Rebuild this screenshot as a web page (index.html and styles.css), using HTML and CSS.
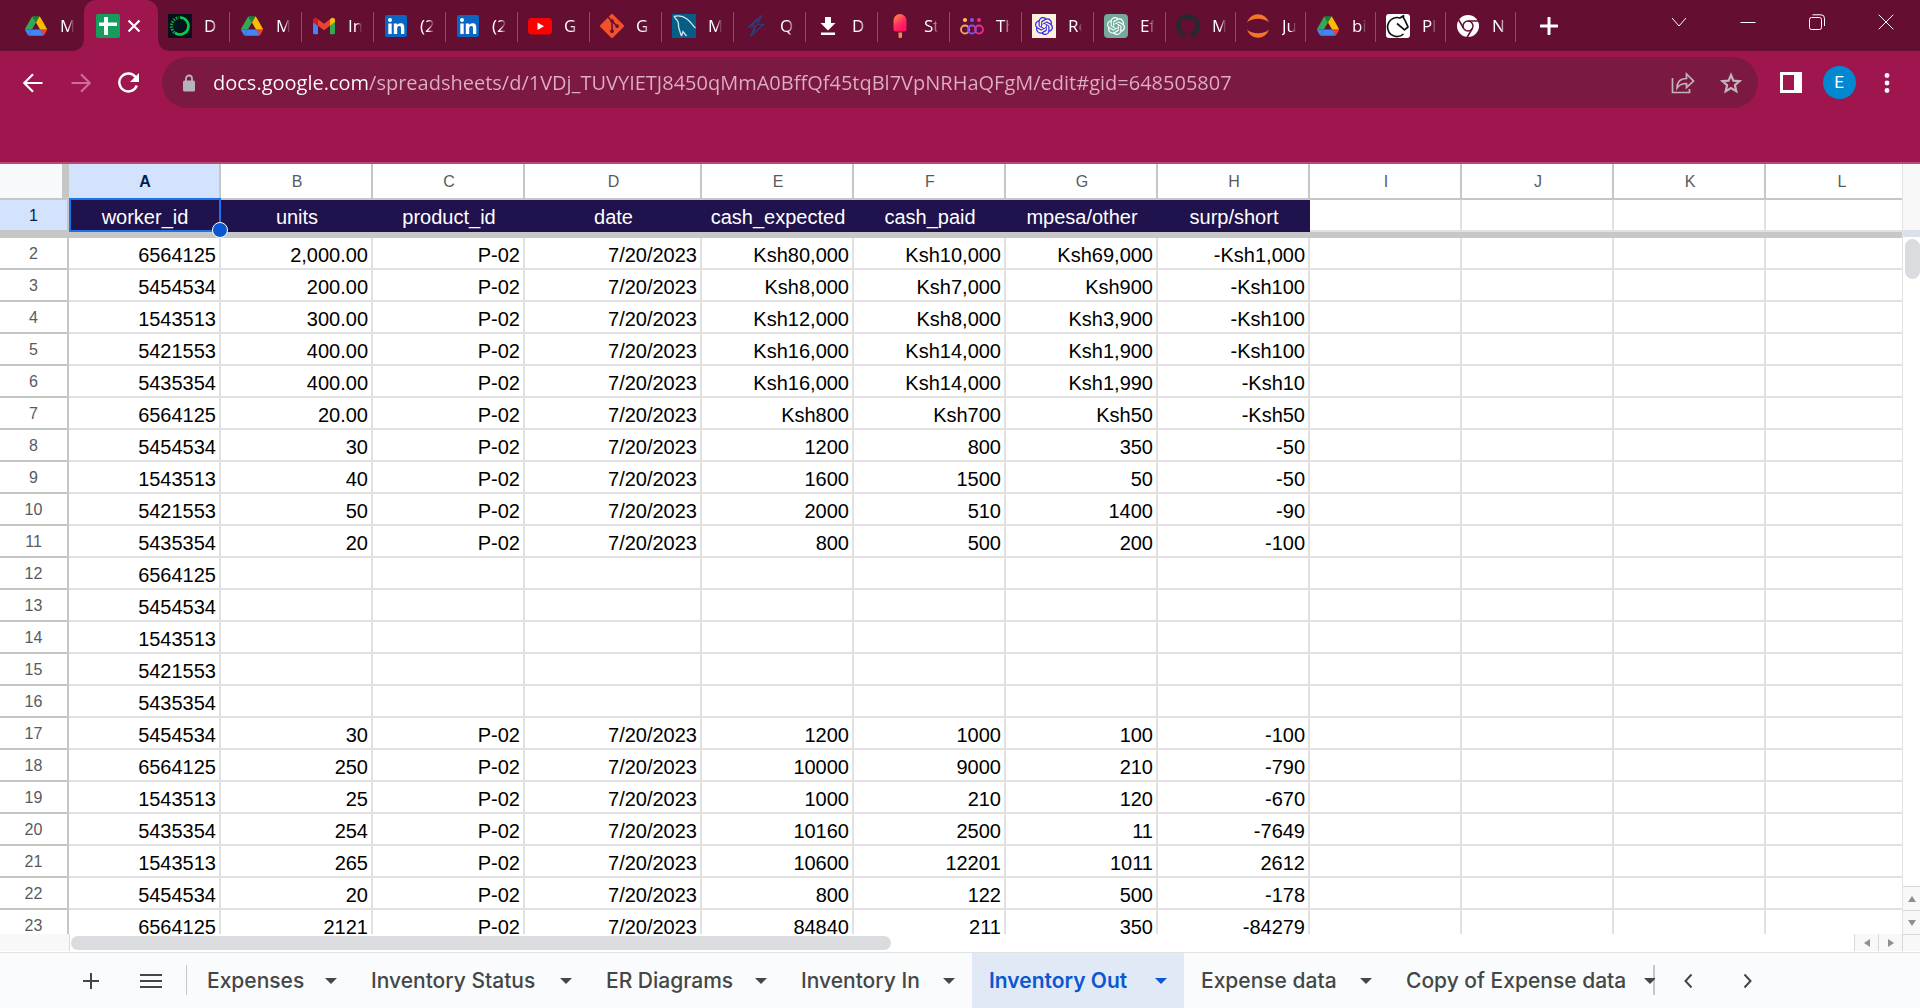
FILE: index.html
```html
<!DOCTYPE html>
<html lang="en">
<head>
<meta charset="utf-8">
<title>Inventory Out</title>
<link rel="stylesheet" href="styles.css">
</head>
<body>
<svg class="sprite" aria-hidden="true">
  <symbol id="drive" viewBox="0 0 87.3 78">
    <path fill="#4285f4" d="m6.6 66.85 3.85 6.65c.8 1.4 1.95 2.5 3.3 3.3l13.75-23.8h-27.5c0 1.55.4 3.1 1.2 4.5z"/>
    <path fill="#34a853" d="m43.65 25-13.75-23.8c-1.35.8-2.5 1.9-3.3 3.3l-25.4 44a9.06 9.06 0 0 0-1.2 4.5h27.5z"/>
    <path fill="#ea4335" d="m73.55 76.8c1.35-.8 2.5-1.9 3.3-3.3l1.6-2.75 7.65-13.25c.8-1.4 1.2-2.95 1.2-4.5h-27.5l5.85 11.5z"/>
    <path fill="#188038" d="m43.65 25 13.75-23.8c-1.35-.8-2.9-1.2-4.5-1.2h-18.5c-1.6 0-3.15.45-4.5 1.2z"/>
    <path fill="#4285f4" d="m59.8 53h-32.3l-13.75 23.8c1.35.8 2.9 1.2 4.5 1.2h50.8c1.6 0 3.15-.45 4.5-1.2z"/>
    <path fill="#fbbc04" d="m73.4 26.5-12.7-22c-.8-1.4-1.95-2.5-3.3-3.3l-13.75 23.8 16.15 28h27.45c0-1.55-.4-3.1-1.2-4.5z"/>
  </symbol>
  <symbol id="linkedin" viewBox="0 0 24 24">
    <rect x="1" y="1" width="22" height="22" rx="2" fill="#0a66c2"/>
    <circle cx="6" cy="6" r="2" fill="#fff"/>
    <path fill="#fff" d="M4.300 9.500h3.400V20H4.300zM9.800 9.500H13v1.500c.6-1 1.800-1.800 3.500-1.800 3.100 0 3.800 2 3.800 4.700V20H17v-5.400c0-1.300-.1-2.700-1.800-2.700s-2 1.300-2 2.600V20H9.800z"/>
  </symbol>
  <symbol id="knot" viewBox="0 0 24 24">
    <path d="M22.2819 9.8211a5.9847 5.9847 0 0 0-.5157-4.9108 6.0462 6.0462 0 0 0-6.5098-2.9A6.0651 6.0651 0 0 0 4.9807 4.1818a5.9847 5.9847 0 0 0-3.9977 2.9 6.0462 6.0462 0 0 0 .7427 7.0966 5.98 5.98 0 0 0 .511 4.9107 6.051 6.051 0 0 0 6.5146 2.9001A5.9847 5.9847 0 0 0 13.2599 24a6.0557 6.0557 0 0 0 5.7718-4.2058 5.9894 5.9894 0 0 0 3.9977-2.9001 6.0557 6.0557 0 0 0-.7475-7.0729zm-9.022 12.6081a4.4755 4.4755 0 0 1-2.8764-1.0408l.1419-.0804 4.7783-2.7582a.7948.7948 0 0 0 .3927-.6813v-6.7369l2.02 1.1686a.071.071 0 0 1 .038.052v5.5826a4.504 4.504 0 0 1-4.4945 4.4944zm-9.6607-4.1254a4.4708 4.4708 0 0 1-.5346-3.0137l.142.0852 4.783 2.7582a.7712.7712 0 0 0 .7806 0l5.8428-3.3685v2.3324a.0804.0804 0 0 1-.0332.0615L9.74 19.9502a4.4992 4.4992 0 0 1-6.1408-1.6464zM2.3408 7.8956a4.485 4.485 0 0 1 2.3655-1.9728V11.6a.7664.7664 0 0 0 .3879.6765l5.8144 3.3543-2.0201 1.1685a.0757.0757 0 0 1-.071 0l-4.8303-2.7865A4.504 4.504 0 0 1 2.3408 7.872zm16.5963 3.8558L13.1038 8.364 15.1192 7.2a.0757.0757 0 0 1 .071 0l4.8303 2.7913a4.4944 4.4944 0 0 1-.6765 8.1042v-5.6772a.79.79 0 0 0-.407-.667zm2.0107-3.0231l-.142-.0852-4.7735-2.7818a.7759.7759 0 0 0-.7854 0L9.409 9.2297V6.8974a.0662.0662 0 0 1 .0284-.0615l4.8303-2.7866a4.4992 4.4992 0 0 1 6.6802 4.66zM8.3065 12.863l-2.02-1.1638a.0804.0804 0 0 1-.038-.0567V6.0742a4.4992 4.4992 0 0 1 7.3757-3.4537l-.142.0805L8.704 5.459a.7948.7948 0 0 0-.3927.6813zm1.0976-2.3654l2.602-1.4998 2.6069 1.4998v2.9994l-2.5974 1.4997-2.6067-1.4997Z"/>
  </symbol>
</svg>

<header class="browser">
  <div class="strip">
    <nav class="tabs" aria-label="Open tabs">
      <button class="tab tab-first"><svg class="fav"><use href="#drive" x="1" y="1" width="22" height="22"/></svg><span class="tab-name">M</span></button>
      <button class="tab tab-active" aria-label="Current tab">
        <svg class="fav" viewBox="0 0 24 24"><rect width="24" height="24" rx="2" fill="#169c5b"/><path fill="#fff" d="M8 3h4v18H8zM3 8.500h18v3.500H3z"/></svg>
        <svg class="tab-close" viewBox="0 0 14 14"><path d="M1.500 1.500l11 11M12.500 1.500l-11 11" stroke="#fff" stroke-width="2.200"/></svg>
      </button>
      <button class="tab"><svg class="fav" viewBox="0 0 24 24"><rect width="24" height="24" fill="#07111b"/><path d="M12 3.500a8.500 8.500 0 1 1-5 15.400" fill="none" stroke="#0ccb4b" stroke-width="2.600"/><path d="M6.500 18.500A8.500 8.500 0 0 1 11 3.600" fill="none" stroke="#0aa544" stroke-width="3" stroke-dasharray="1.500 1.200"/></svg><span class="tab-name">D</span></button>
      <button class="tab"><svg class="fav"><use href="#drive" x="1" y="1" width="22" height="22"/></svg><span class="tab-name">M</span></button>
      <button class="tab"><svg class="fav" viewBox="48 27 96 96"><path fill="#4285f4" d="M58 108h14V74L52 59v43c0 3.320 2.690 6 6 6"/><path fill="#34a853" d="M120 108h14c3.320 0 6-2.690 6-6V59l-20 15"/><path fill="#fbbc04" d="M120 48v26l20-15v-8c0-7.420-8.470-11.650-14.400-7.200"/><path fill="#ea4335" d="M72 74V48l24 18 24-18v26L96 92"/><path fill="#c5221f" d="M52 51v8l20 15V48l-5.600-4.200c-5.940-4.450-14.400-.22-14.400 7.200"/></svg><span class="tab-name">In</span></button>
      <button class="tab"><svg class="fav"><use href="#linkedin"/></svg><span class="tab-name">(2</span></button>
      <button class="tab"><svg class="fav"><use href="#linkedin"/></svg><span class="tab-name">(2</span></button>
      <button class="tab"><svg class="fav" viewBox="0 0 24 24"><rect y="4" width="24" height="16.500" rx="4" fill="#f00"/><path fill="#fff" d="M9.500 8.500v7.500l6.500-3.750z"/></svg><span class="tab-name">G</span></button>
      <button class="tab"><svg class="fav" viewBox="0 0 24 24"><path fill="#f4502a" d="M23.546 10.930L13.067.452c-.604-.603-1.582-.603-2.188 0L8.708 2.627l2.760 2.760c.645-.215 1.379-.07 1.889.441.516.515.658 1.258.438 1.900l2.658 2.660c.645-.223 1.387-.078 1.900.435.721.720.721 1.884 0 2.604-.719.719-1.881.719-2.600 0-.539-.541-.674-1.337-.404-1.996L12.860 8.955v6.525c.176.086.342.203.488.348.713.721.713 1.883 0 2.600-.719.721-1.889.721-2.609 0-.719-.719-.719-1.879 0-2.598.182-.18.387-.316.605-.406V8.835c-.217-.091-.424-.222-.6-.401-.545-.545-.676-1.342-.396-2.009L7.636 3.700.45 10.881c-.6.605-.6 1.584 0 2.189l10.480 10.477c.604.604 1.582.604 2.186 0l10.430-10.430c.605-.603.605-1.582 0-2.187"/></svg><span class="tab-name">Gi</span></button>
      <button class="tab"><svg class="fav" viewBox="0 0 24 24"><rect width="24" height="24" rx="1" fill="#055e86"/><path fill="none" stroke="#d5e6ee" stroke-width="1.300" d="M2 2.500c4-1 9-.5 13 2.500 4 3 5 6 8.500 9M2 2.500c1 2 3 3 4 5.500s0 4 1 6.500 1 4.500 2.500 7.500M9.500 22l1.500-4.500 3.500 4.500"/></svg><span class="tab-name">M</span></button>
      <button class="tab"><svg class="fav" viewBox="0 0 24 24"><path fill="none" stroke="#27417f" stroke-width="1.200" d="M17.500 1.500L4.500 13h6L6.500 22.500 19.500 10.500h-6zM15 5l-7.500 6.500h4.500l-2.500 6.500"/></svg><span class="tab-name">Q</span></button>
      <button class="tab"><svg class="fav" viewBox="0 0 24 24"><path fill="#fff" d="M9 3h6v6h4.500L12 16.500 4.500 9H9zM5 18.500h14V21H5z"/></svg><span class="tab-name">D</span></button>
      <button class="tab"><svg class="fav" viewBox="0 0 24 24"><defs><linearGradient id="ice" x2=".6" y2="1"><stop stop-color="#ff9a3d"/><stop offset=".6" stop-color="#ff2b62"/><stop offset="1" stop-color="#ff1060"/></linearGradient></defs><path fill="url(#ice)" d="M5.500 6.500a6.500 6.500 0 0 1 13 0V15a2.500 2.500 0 0 1-2.500 2.500H8A2.500 2.500 0 0 1 5.500 15z"/><path fill="#f5894a" d="M10.500 18.500h3.500v4a1.500 1.500 0 0 1-3.500 0z"/></svg><span class="tab-name">St</span></button>
      <button class="tab"><svg class="fav" viewBox="0 0 24 24" fill="none" stroke-width="1.800"><circle cx="5" cy="15.500" r="4" stroke="#f7a65a"/><circle cx="12" cy="15.500" r="4" stroke="#7856f5"/><circle cx="19" cy="15.500" r="4" stroke="#ec2f8c"/><g stroke="none"><circle cx="5" cy="6" r="2" fill="#fbc65a"/><circle cx="12" cy="6" r="2" fill="#7856f5"/><circle cx="19" cy="6" r="2" fill="#ec2f8c"/></g></svg><span class="tab-name">Th</span></button>
      <button class="tab"><svg class="fav" viewBox="0 0 24 24"><rect width="24" height="24" fill="#fdf0dc"/><use href="#knot" x="3" y="3" width="18" height="18" fill="#2b23e8"/></svg><span class="tab-name">Re</span></button>
      <button class="tab"><svg class="fav" viewBox="0 0 24 24"><rect width="24" height="24" rx="4" fill="#74aa9c"/><use href="#knot" x="3" y="3" width="18" height="18" fill="#fff"/></svg><span class="tab-name">Ef</span></button>
      <button class="tab tab-narrow"><svg class="fav" viewBox="0 0 24 24"><path fill="#24292f" d="M12 .297c-6.630 0-12 5.373-12 12 0 5.303 3.438 9.800 8.205 11.385.6.113.82-.258.82-.577 0-.285-.01-1.040-.015-2.040-3.338.724-4.042-1.610-4.042-1.610C4.422 18.070 3.633 17.700 3.633 17.700c-1.087-.744.084-.729.084-.729 1.205.084 1.838 1.236 1.838 1.236 1.070 1.835 2.809 1.305 3.495.998.108-.776.417-1.305.76-1.605-2.665-.3-5.466-1.332-5.466-5.930 0-1.310.465-2.380 1.235-3.220-.135-.303-.54-1.523.105-3.176 0 0 1.005-.322 3.300 1.230.96-.267 1.980-.399 3-.405 1.020.006 2.040.138 3 .405 2.280-1.552 3.285-1.230 3.285-1.230.645 1.653.24 2.873.12 3.176.765.840 1.230 1.910 1.230 3.220 0 4.610-2.805 5.625-5.475 5.920.42.360.81 1.096.81 2.220 0 1.606-.015 2.896-.015 3.286 0 .315.21.690.825.570C20.565 22.092 24 17.592 24 12.297c0-6.627-5.373-12-12-12"/></svg><span class="tab-name">M</span></button>
      <button class="tab tab-narrow"><svg class="fav" viewBox="0 0 24 24"><path fill="#f37726" d="M1 8.500a11.500 11.500 0 0 1 22 0C18 3.500 6 3.500 1 8.500zM1 15.500a11.500 11.500 0 0 0 22 0c-5 5-17 5-22 0z"/></svg><span class="tab-name">Ju</span></button>
      <button class="tab tab-narrow"><svg class="fav"><use href="#drive" x="1" y="1" width="22" height="22"/></svg><span class="tab-name">bi</span></button>
      <button class="tab tab-narrow"><svg class="fav" viewBox="0 0 24 24"><rect width="24" height="24" rx="3" fill="#fff"/><path fill="none" stroke="#111" stroke-width="1.700" stroke-linejoin="round" d="M17.500 20A9.500 9.500 0 1 1 14 4l3.500-2.300V4c2 2.500 3 6 4.500 9l-3.500 2.800-7.500-6.300"/></svg><span class="tab-name">Pl</span></button>
      <button class="tab tab-narrow"><svg class="fav" viewBox="0 0 24 24"><circle cx="12" cy="12" r="11" fill="#fff"/><g fill="none" stroke="#640e31" stroke-width="1.500"><circle cx="12" cy="12" r="5"/><path d="M12 7h10.500M7.700 14.500L2.500 5.500M16.300 14.500L11 23.500"/></g></svg><span class="tab-name">N</span></button>
    </nav>
    <button class="new-tab" aria-label="New tab"><svg width="18" height="18" viewBox="0 0 18 18"><path d="M9 1v16M1 9h16" stroke="#fff" stroke-width="3" stroke-linecap="round"/></svg></button>
    <div class="window-buttons">
      <button aria-label="Search tabs"><svg width="16" height="16" viewBox="0 0 16 16"><path d="M1 4l7 8 7-8"/></svg></button>
      <button aria-label="Minimise"><svg width="16" height="16" viewBox="0 0 16 16"><path d="M.5 8.500h15"/></svg></button>
      <button aria-label="Restore"><svg width="16" height="16" viewBox="0 0 16 16"><rect x=".5" y="3.500" width="12" height="12" rx="2"/><path d="M3.500 .8h8.500a3.500 3.500 0 0 1 3.500 3.500V12"/></svg></button>
      <button aria-label="Close"><svg width="16" height="16" viewBox="0 0 16 16"><path d="M.7.7l14.600 14.600M15.300.7L.7 15.300"/></svg></button>
    </div>
  </div>
  <div class="toolbar">
    <button class="tool" aria-label="Back"><svg width="20" height="20" viewBox="0 0 20 20"><path d="M19.500 10H1.500M10 1.200L1.200 10l8.800 8.800" stroke="#fff" stroke-width="2.200" fill="none"/></svg></button>
    <button class="tool" aria-label="Forward"><svg width="20" height="20" viewBox="0 0 20 20"><path d="M.5 10h18M10 1.200l8.800 8.800-8.800 8.800" stroke="#cf6d97" stroke-width="2.200" fill="none"/></svg></button>
    <button class="tool" aria-label="Reload"><svg width="22" height="22" viewBox="0 0 22 22"><path d="M18.800 13.500A9 9 0 1 1 17.500 5" stroke="#fff" stroke-width="2.400" fill="none"/><path d="M21 1v9h-9z" fill="#fff"/></svg></button>
    <div class="omnibox">
      <svg class="lock" width="12" height="18" viewBox="0 0 12 18"><path d="M3 8V4.500a3 3 0 0 1 6 0V8" fill="none" stroke="#b4b4ba" stroke-width="1.800"/><rect y="6.500" width="12" height="11" rx="1.500" fill="#b4b4ba"/></svg>
      <input class="url" type="text" aria-label="Address" value="docs.google.com/spreadsheets/d/1VDj_TUVYIETJ8450qMmA0BffQf45tqBl7VpNRHaQFgM/edit#gid=648505807">
      <button class="tool" aria-label="Share"><svg width="24" height="22" viewBox="0 0 24 22"><path d="M1.500 6v14.500h17V17M6 16c0-6 3-9.500 9.500-9.500V2l7 7-7 6.500v-4C11 11.500 8 13 6 16z" fill="none" stroke="#c3b4bc" stroke-width="1.700"/></svg></button>
      <button class="tool" aria-label="Bookmark"><svg width="24" height="24" viewBox="0 0 24 24"><path d="M12 4l2.400 5.700 6.100.5-4.600 4 1.400 6-5.300-3.200-5.300 3.200 1.400-6-4.600-4 6.100-.5z" fill="none" stroke="#c3b4bc" stroke-width="2.200"/></svg></button>
    </div>
    <button class="tool" aria-label="Side panel"><svg width="22" height="21" viewBox="0 0 22 21"><path fill="#fff" fill-rule="evenodd" d="M0 0h22v21H0zM3 3v15h11V3z"/></svg></button>
    <button class="tool" aria-label="Profile"><span class="avatar">E</span></button>
    <button class="tool" aria-label="Menu"><svg width="6" height="20" viewBox="0 0 6 20" fill="#fff"><circle cx="3" cy="2.500" r="2.400"/><circle cx="3" cy="10" r="2.400"/><circle cx="3" cy="17.500" r="2.400"/></svg></button>
  </div>
</header>

<main class="sheet">
  <div class="viewport">
    <table class="grid">
      <colgroup><col class="col-row"><col><col><col><col class="col-date"><col><col><col><col><col><col><col><col></colgroup>
      <thead>
        <tr><td class="corner"></td><th class="picked">A</th><th>B</th><th>C</th><th>D</th><th>E</th><th>F</th><th>G</th><th>H</th><th>I</th><th>J</th><th>K</th><th>L</th></tr>
      </thead>
      <tbody>
        <tr class="titles"><th class="picked">1</th><td class="active-cell">worker_id<span class="selection"></span></td><td>units</td><td>product_id</td><td>date</td><td>cash_expected</td><td>cash_paid</td><td>mpesa/other</td><td>surp/short</td><td class="blank"></td><td class="blank"></td><td class="blank"></td><td class="blank"></td></tr>
        <tr class="freeze"><td colspan="13"></td></tr>
        <tr><th>2</th><td>6564125</td><td>2,000.00</td><td>P-02</td><td>7/20/2023</td><td>Ksh80,000</td><td>Ksh10,000</td><td>Ksh69,000</td><td>-Ksh1,000</td><td></td><td></td><td></td><td></td></tr>
        <tr><th>3</th><td>5454534</td><td>200.00</td><td>P-02</td><td>7/20/2023</td><td>Ksh8,000</td><td>Ksh7,000</td><td>Ksh900</td><td>-Ksh100</td><td></td><td></td><td></td><td></td></tr>
        <tr><th>4</th><td>1543513</td><td>300.00</td><td>P-02</td><td>7/20/2023</td><td>Ksh12,000</td><td>Ksh8,000</td><td>Ksh3,900</td><td>-Ksh100</td><td></td><td></td><td></td><td></td></tr>
        <tr><th>5</th><td>5421553</td><td>400.00</td><td>P-02</td><td>7/20/2023</td><td>Ksh16,000</td><td>Ksh14,000</td><td>Ksh1,900</td><td>-Ksh100</td><td></td><td></td><td></td><td></td></tr>
        <tr><th>6</th><td>5435354</td><td>400.00</td><td>P-02</td><td>7/20/2023</td><td>Ksh16,000</td><td>Ksh14,000</td><td>Ksh1,990</td><td>-Ksh10</td><td></td><td></td><td></td><td></td></tr>
        <tr><th>7</th><td>6564125</td><td>20.00</td><td>P-02</td><td>7/20/2023</td><td>Ksh800</td><td>Ksh700</td><td>Ksh50</td><td>-Ksh50</td><td></td><td></td><td></td><td></td></tr>
        <tr><th>8</th><td>5454534</td><td>30</td><td>P-02</td><td>7/20/2023</td><td>1200</td><td>800</td><td>350</td><td>-50</td><td></td><td></td><td></td><td></td></tr>
        <tr><th>9</th><td>1543513</td><td>40</td><td>P-02</td><td>7/20/2023</td><td>1600</td><td>1500</td><td>50</td><td>-50</td><td></td><td></td><td></td><td></td></tr>
        <tr><th>10</th><td>5421553</td><td>50</td><td>P-02</td><td>7/20/2023</td><td>2000</td><td>510</td><td>1400</td><td>-90</td><td></td><td></td><td></td><td></td></tr>
        <tr><th>11</th><td>5435354</td><td>20</td><td>P-02</td><td>7/20/2023</td><td>800</td><td>500</td><td>200</td><td>-100</td><td></td><td></td><td></td><td></td></tr>
        <tr><th>12</th><td>6564125</td><td></td><td></td><td></td><td></td><td></td><td></td><td></td><td></td><td></td><td></td><td></td></tr>
        <tr><th>13</th><td>5454534</td><td></td><td></td><td></td><td></td><td></td><td></td><td></td><td></td><td></td><td></td><td></td></tr>
        <tr><th>14</th><td>1543513</td><td></td><td></td><td></td><td></td><td></td><td></td><td></td><td></td><td></td><td></td><td></td></tr>
        <tr><th>15</th><td>5421553</td><td></td><td></td><td></td><td></td><td></td><td></td><td></td><td></td><td></td><td></td><td></td></tr>
        <tr><th>16</th><td>5435354</td><td></td><td></td><td></td><td></td><td></td><td></td><td></td><td></td><td></td><td></td><td></td></tr>
        <tr><th>17</th><td>5454534</td><td>30</td><td>P-02</td><td>7/20/2023</td><td>1200</td><td>1000</td><td>100</td><td>-100</td><td></td><td></td><td></td><td></td></tr>
        <tr><th>18</th><td>6564125</td><td>250</td><td>P-02</td><td>7/20/2023</td><td>10000</td><td>9000</td><td>210</td><td>-790</td><td></td><td></td><td></td><td></td></tr>
        <tr><th>19</th><td>1543513</td><td>25</td><td>P-02</td><td>7/20/2023</td><td>1000</td><td>210</td><td>120</td><td>-670</td><td></td><td></td><td></td><td></td></tr>
        <tr><th>20</th><td>5435354</td><td>254</td><td>P-02</td><td>7/20/2023</td><td>10160</td><td>2500</td><td>11</td><td>-7649</td><td></td><td></td><td></td><td></td></tr>
        <tr><th>21</th><td>1543513</td><td>265</td><td>P-02</td><td>7/20/2023</td><td>10600</td><td>12201</td><td>1011</td><td>2612</td><td></td><td></td><td></td><td></td></tr>
        <tr><th>22</th><td>5454534</td><td>20</td><td>P-02</td><td>7/20/2023</td><td>800</td><td>122</td><td>500</td><td>-178</td><td></td><td></td><td></td><td></td></tr>
        <tr><th>23</th><td>6564125</td><td>2121</td><td>P-02</td><td>7/20/2023</td><td>84840</td><td>211</td><td>350</td><td>-84279</td><td></td><td></td><td></td><td></td></tr>
      </tbody>
    </table>
  </div>
  <div class="vbar">
    <div class="vbar-top"></div>
    <div class="vbar-track"><div class="vthumb"></div></div>
    <button class="step" aria-label="Scroll up"><svg width="8" height="6"><path d="M0 6l4-6 4 6z"/></svg></button>
    <button class="step" aria-label="Scroll down"><svg width="8" height="6"><path d="M0 0l4 6 4-6z"/></svg></button>
  </div>
  <div class="hbar">
    <div class="hbar-corner"></div>
    <div class="hbar-track"><div class="hthumb"></div></div>
    <button class="step step-side" aria-label="Scroll left"><svg width="6" height="8"><path d="M6 0L0 4l6 4z"/></svg></button>
    <button class="step step-side" aria-label="Scroll right"><svg width="6" height="8"><path d="M0 0l6 4-6 4z"/></svg></button>
  </div>
  <div class="bar-corner"></div>
</main>

<footer class="sheets">
  <button class="icon-button" aria-label="Add sheet"><svg width="16" height="16" viewBox="0 0 16 16"><path d="M8 0v16M0 8h16" stroke="#444746" stroke-width="2"/></svg></button>
  <button class="icon-button" aria-label="All sheets"><svg width="22" height="16" viewBox="0 0 22 16"><path d="M0 2h22M0 8h22M0 14h22" stroke="#444746" stroke-width="2"/></svg></button>
  <nav class="sheet-tabs" aria-label="Sheets">
    <button class="sheet-tab">Expenses<i class="caret"></i></button>
    <button class="sheet-tab">Inventory Status<i class="caret"></i></button>
    <button class="sheet-tab">ER Diagrams<i class="caret"></i></button>
    <button class="sheet-tab">Inventory In<i class="caret"></i></button>
    <button class="sheet-tab sheet-current">Inventory Out<i class="caret"></i></button>
    <button class="sheet-tab">Expense data<i class="caret"></i></button>
    <button class="sheet-tab">Copy of Expense data<i class="caret"></i></button>
  </nav>
  <button class="icon-button" aria-label="Previous sheets"><svg width="10" height="16" viewBox="0 0 10 16"><path d="M8.500 1.500L2.500 8l6 6.500" fill="none" stroke="#444746" stroke-width="2"/></svg></button>
  <button class="icon-button" aria-label="Next sheets"><svg width="10" height="16" viewBox="0 0 10 16"><path d="M1.500 1.500L7.500 8l-6 6.500" fill="none" stroke="#444746" stroke-width="2"/></svg></button>
</footer>
</body>
</html>
```
FILE: styles.css
```css
* { box-sizing: border-box; }

body {
  margin: 0;
  height: 100vh;
  display: flex;
  flex-direction: column;
  overflow: hidden;
  background: #fff;
  font-family: "Liberation Sans", Arial, sans-serif;
}

button {
  display: flex;
  align-items: center;
  justify-content: center;
  padding: 0;
  border: 0;
  background: none;
  color: inherit;
  font: inherit;
}

svg { display: block; flex: none; }
.sprite { position: absolute; width: 0; height: 0; }

/* Browser frame */
.browser {
  flex: none;
  height: 164px;
  background: #9f154e;
  border-bottom: 2px solid #b84a78;
}

.strip {
  display: flex;
  height: 51px;
  background: #640e31;
}

.tabs { display: flex; }

.tab {
  width: 72px;
  padding-left: 10px;
  gap: 12px;
  justify-content: flex-start;
  background: linear-gradient(#8f4a66, #8f4a66) right 12px / 1px 30px no-repeat;
}
.tab-narrow { width: 70px; }
.tab-first { width: 84px; padding-left: 24px; background: none; }

.tab-active {
  position: relative;
  width: 74px;
  padding-left: 12px;
  gap: 7px;
  background: #9f154e;
  border-radius: 12px 12px 0 0;
}
.tab-active::before,
.tab-active::after {
  content: "";
  position: absolute;
  bottom: 0;
  width: 10px;
  height: 10px;
}
.tab-active::before { right: 100%; background: radial-gradient(circle at 0 0, #640e31 9px, #9f154e 10px); }
.tab-active::after { left: 100%; background: radial-gradient(circle at 100% 0, #640e31 9px, #9f154e 10px); }

.fav { width: 24px; height: 24px; }
.tab-close { width: 14px; height: 14px; }

.tab-name {
  width: 14px;
  overflow: hidden;
  white-space: nowrap;
  text-align: left;
  color: #fff;
  font: 17px/24px "Open Sans", "Noto Sans", sans-serif;
  -webkit-mask-image: linear-gradient(90deg, #000 60%, transparent);
  mask-image: linear-gradient(90deg, #000 60%, transparent);
}

.new-tab { width: 66px; }

.window-buttons { display: flex; margin-left: auto; height: 43px; }
.window-buttons button { width: 69px; }
.window-buttons svg { fill: none; stroke: #fff; stroke-width: 1; }

.toolbar {
  display: flex;
  align-items: center;
  padding: 6px 9px;
}
.tool { flex: none; width: 48px; height: 51px; }

.omnibox {
  flex: 1;
  display: flex;
  align-items: center;
  height: 51px;
  margin: 0 9px;
  padding: 0 3px 0 21px;
  border-radius: 26px;
  background: #7c1942;
}

.url {
  flex: 1;
  min-width: 0;
  margin-left: 18px;
  padding: 0;
  border: 0;
  outline: 0;
  font: 20px/28px "Open Sans", "Noto Sans", sans-serif;
  background: linear-gradient(90deg, #fff 156px, #dcb0c2 156px);
  -webkit-background-clip: text;
  background-clip: text;
  color: #dcb0c2;
  -webkit-text-fill-color: transparent;
}

.avatar {
  width: 33px;
  border-radius: 50%;
  background: #0288d1;
  color: #fff;
  font: 17px/33px Roboto, sans-serif;
}

/* Spreadsheet */
.sheet {
  flex: 1;
  min-height: 0;
  display: grid;
  grid-template-columns: minmax(0, 1fr) 18px;
  grid-template-rows: minmax(0, 1fr) 18px;
}

.viewport { overflow: hidden; }

.grid {
  width: 1918px;
  table-layout: fixed;
  border-collapse: separate;
  border-spacing: 0;
}
.grid col { width: 152px; }
.grid .col-row { width: 69px; }
.grid .col-date { width: 177px; }

.grid th {
  height: 32px;
  padding: 2px 0 0;
  border: solid #c4c7c5;
  border-width: 0 2px 2px 0;
  color: #575b5f;
  font-size: 16px;
  font-weight: 400;
  line-height: 28px;
}
.grid thead th { height: 36px; padding-left: 2px; }
.grid .picked { background: #d3e3fd; color: #041e49; }
.grid thead .picked { font-weight: 700; }

.grid td {
  height: 32px;
  padding: 4px 3px 0 0;
  border: solid #e1e1e1;
  border-width: 0 2px 2px 0;
  color: #000;
  font-size: 20px;
  line-height: 26px;
  text-align: right;
  white-space: nowrap;
}

.grid .corner {
  padding: 0;
  background: #f8f9fa;
  border-color: #c4c7c5;
  border-right-width: 7px;
}

.grid .titles td {
  padding: 4px 0 0 2px;
  background: #20124d;
  border-color: #20124d;
  color: #fff;
  text-align: center;
}
.grid .titles .blank { background: #fff; border-color: #e1e1e1; }

.grid .active-cell { position: relative; }
.selection {
  position: absolute;
  top: -2px;
  left: 0;
  right: -2px;
  bottom: -2px;
  border: 2px solid #1a73e8;
}
.selection::after {
  content: "";
  position: absolute;
  right: -9px;
  bottom: -8px;
  width: 14px;
  height: 14px;
  border: 1px solid #fff;
  border-radius: 50%;
  background: #0b57d0;
}

.grid .freeze td { height: 6px; padding: 0; border: 0; background: #c7c7c7; line-height: 0; }

/* Scroll bars */
.vbar { display: flex; flex-direction: column; border-left: 1px solid #e1e3e1; }
.vbar-top { height: 73px; background: #f8f8f8; border-bottom: 7px solid #dbe1ea; }
.vbar-track { flex: 1; padding: 2px 0 0 2px; }
.vthumb { width: 15px; height: 40px; border-radius: 8px; background: #dadce0; }

.step {
  height: 24px;
  background: #f8f8f8;
  border-top: 1px solid #d9d9d9;
}
.step svg { fill: #8f8f8f; }
.step-side { width: 24px; height: 17px; border: 0; border-left: 1px solid #d9d9d9; }

.hbar { display: flex; }
.hbar-corner { width: 70px; height: 17px; background: #f8f8f8; border-right: 1px solid #d9d9d9; }
.hbar-track { flex: 1; padding: 2px 0 0 1px; }
.hthumb { width: 46%; height: 14px; border-radius: 7px; background: #dadce0; }
.bar-corner { height: 17px; background: #f8f8f8; border: solid #d9d9d9; border-width: 1px 0 0 1px; }

/* Sheet tabs */
.sheets {
  flex: none;
  display: flex;
  align-items: center;
  height: 56px;
  padding-left: 61px;
  border-top: 1px solid #e1e3e1;
  background: #f9fbfd;
  color: #444746;
}
.icon-button { flex: none; width: 60px; height: 30px; }

.sheet-tabs {
  display: grid;
  grid-template-columns: 164px 235px 195px 188px 212px 205px 284px;
  align-self: stretch;
  width: 1469px;
  margin: 0 3px 0 5px;
  padding-left: 4px;
  overflow: hidden;
  background:
    linear-gradient(#c7c7c7, #c7c7c7) left 12px / 1px 30px no-repeat,
    linear-gradient(#c7c7c7, #c7c7c7) right 12px / 2px 30px no-repeat;
}

.sheet-tab {
  justify-content: space-between;
  padding: 0 17px;
  font: 500 21px/28px Inter, Roboto, sans-serif;
  white-space: nowrap;
}
.sheet-current { background: #e1e9f7; color: #0b57d0; font-weight: 600; }

.caret {
  border: 6px solid transparent;
  border-top-color: currentColor;
  border-bottom: 0;
}
```
